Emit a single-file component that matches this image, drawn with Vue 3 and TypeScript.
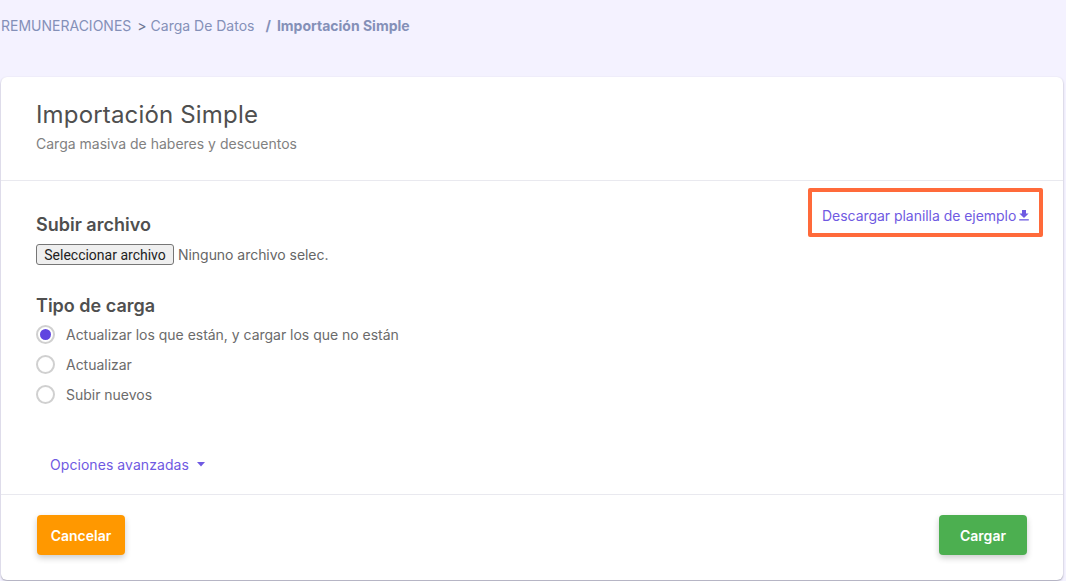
<script setup lang="ts">
const options: string[] = [
  'Actualizar los que están, y cargar los que no están',
  'Actualizar',
  'Subir nuevos',
]
</script>

<template>
  <div class="page">
    <nav class="crumbs">
      <span>REMUNERACIONES</span>
      <span class="sep1">&gt;</span>
      <span>Carga De Datos</span>
      <span class="sep2">/</span>
      <strong>Importación Simple</strong>
    </nav>
    <section class="card">
      <header class="head">
        <h1>Importación Simple</h1>
        <p>Carga masiva de haberes y descuentos</p>
      </header>
      <div class="body">
        <div class="download-wrap">
          <a class="download">
            Descargar planilla de ejemplo
            <svg class="dl" width="10" height="11" viewBox="0 0 10 11" aria-hidden="true">
              <path d="M3 0h4v3.6h2.6L5 8 .4 3.6H3z" fill="currentColor" />
              <rect x="0.2" y="9.2" width="9.6" height="1.3" fill="currentColor" />
            </svg>
          </a>
        </div>
        <h2 class="first">Subir archivo</h2>
        <div class="file">
          <button type="button" class="file-btn">Seleccionar archivo</button>
          <span>Ninguno archivo selec.</span>
        </div>
        <h2 class="second">Tipo de carga</h2>
        <div class="radios">
          <div v-for="(o, i) in options" :key="o" class="radio">
            <span class="dot" :class="{ on: i === 0 }"></span>
            <span>{{ o }}</span>
          </div>
        </div>
        <a class="advanced">
          Opciones avanzadas
          <svg width="8" height="5" viewBox="0 0 8 5" aria-hidden="true"><path d="M0 0h8L4 4.6z" fill="currentColor" /></svg>
        </a>
      </div>
      <footer class="foot">
        <button type="button" class="btn cancel">Cancelar</button>
        <button type="button" class="btn submit">Cargar</button>
      </footer>
    </section>
  </div>
</template>

<style>
html, body { margin: 0; background: #f4f2ff; }
</style>

<style scoped>
.page {
  width: 1066px;
  height: 581px;
  overflow: hidden;
  box-sizing: border-box;
  background: #f4f2ff;
  font-family: Inter, "Liberation Sans", sans-serif;
  padding: 17px 3px 0 1px;
}
.crumbs {
  display: flex;
  align-items: center;
  height: 17px;
  font-size: 14px;
  line-height: 17px;
  color: #8490b8;
  white-space: nowrap;
}
.sep1 { margin: 0 4px 0 6px; color: #6c7693; }
.sep2 { margin: 0 6px 0 11px; font-weight: 700; }
.crumbs strong { font-weight: 700; }
.card {
  margin-top: 43px;
  height: 503px;
  box-sizing: border-box;
  background: #fff;
  border-radius: 6px;
  box-shadow: 0 1px 2px rgba(60, 60, 80, 0.45);
  display: flex;
  flex-direction: column;
}
.head {
  height: 104px;
  box-sizing: border-box;
  padding: 23px 35px 0;
  border-bottom: 1px solid #e9e9ef;
}
h1 {
  margin: 0;
  font-size: 24px;
  letter-spacing: 0.17px;
  line-height: 30px;
  font-weight: 400;
  color: #4f4f4f;
}
.head p {
  margin: 5px 0 0;
  font-size: 14px;
  line-height: 17px;
  color: #818181;
}
.body {
  flex: 1;
  position: relative;
  padding: 0 35px;
}
.download-wrap {
  position: absolute;
  top: 7px;
  right: 20px;
  width: 227px;
  height: 41px;
  border: 4px solid #ff6a3a;
  border-radius: 2px;
  box-sizing: content-box;
}
.download {
  position: absolute;
  left: 10px;
  top: 15px;
  display: flex;
  align-items: center;
  gap: 3px;
  font-size: 14px;
  line-height: 17px;
  letter-spacing: -0.04px;
  color: #6f5ae2;
  white-space: nowrap;
}
h2 {
  margin: 0;
  font-size: 18px;
  line-height: 22px;
  font-weight: 600;
  color: #4f4f4f;
}
h2.first { padding-top: 33px; }
h2.second { margin-top: 30px; }
.file {
  display: flex;
  align-items: center;
  gap: 4px;
  margin-top: 8px;
  font-size: 14px;
  letter-spacing: -0.04px;
  color: #666;
}
.file-btn {
  width: 138px;
  height: 21px;
  padding: 0;
  box-sizing: border-box;
  background: #efefef;
  border: 1px solid #767676;
  border-radius: 3px;
  color: #222;
  font: 14px Roboto, "Liberation Sans", sans-serif;
}
.radios {
  margin-top: 7px;
  display: flex;
  flex-direction: column;
  gap: 10px;
}
.radio {
  display: flex;
  align-items: center;
  gap: 11px;
  height: 20px;
  font-size: 14px;
  letter-spacing: -0.02px;
  color: #6b6b6b;
}
.dot {
  width: 19px;
  height: 19px;
  box-sizing: border-box;
  border: 2px solid #d0d0d0;
  border-radius: 50%;
  background: #fff;
  display: block;
  position: relative;
}
.dot.on::after {
  content: "";
  position: absolute;
  inset: 2px;
  border-radius: 50%;
  background: #6044e0;
}
.advanced {
  position: absolute;
  left: 49px;
  top: 275px;
  display: flex;
  align-items: center;
  gap: 8px;
  font-size: 14px;
  line-height: 17px;
  letter-spacing: 0.06px;
  color: #6f5ae2;
}
.foot {
  height: 86px;
  box-sizing: border-box;
  border-top: 1px solid #e9e9ef;
  padding: 20px 36px 0 36px;
  display: flex;
  justify-content: space-between;
  align-items: flex-start;
}
.btn {
  width: 88px;
  height: 40px;
  border: 0;
  border-radius: 4px;
  color: #fff;
  font: 600 14px Inter, "Liberation Sans", sans-serif;
  box-shadow: 0 3px 6px rgba(0, 0, 0, 0.2);
}
.cancel { background: #ff9800; }
.submit { background: #4caf50; }
</style>
